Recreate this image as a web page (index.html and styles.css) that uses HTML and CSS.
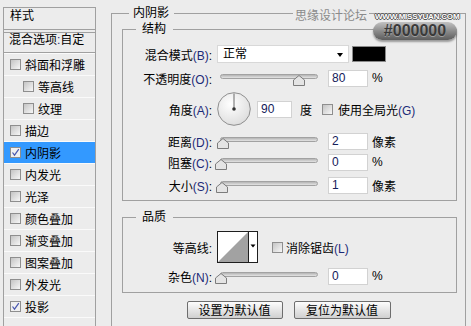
FILE: index.html
```html
<!DOCTYPE html>
<html lang="zh-CN">
<head>
    <meta charset="UTF-8">
    <title>图层样式 - 内阴影</title>
    <link rel="stylesheet" href="styles.css">
</head>
<body>
    <div class="dialog">
        <!-- 左侧样式列表 -->
        <div class="styles-list">
            <div class="list-title">样式</div>
            <div class="list-blend">混合选项<span class="key">:</span>自定</div>
            <div class="item"><span class="cb"></span>斜面和浮雕</div>
            <div class="item sub"><span class="cb"></span>等高线</div>
            <div class="item sub"><span class="cb"></span>纹理</div>
            <div class="item"><span class="cb"></span>描边</div>
            <div class="item active"><span class="cb"><svg width="9" height="9" viewBox="0 0 9 9"><path d="M1.5 4.5 L3.5 7.2 L7.8 1.2" fill="none" stroke="#4a58b0" stroke-width="1.2"/></svg></span>内阴影</div>
            <div class="item"><span class="cb"></span>内发光</div>
            <div class="item"><span class="cb"></span>光泽</div>
            <div class="item"><span class="cb"></span>颜色叠加</div>
            <div class="item"><span class="cb"></span>渐变叠加</div>
            <div class="item"><span class="cb"></span>图案叠加</div>
            <div class="item"><span class="cb"></span>外发光</div>
            <div class="item"><span class="cb"><svg width="9" height="9" viewBox="0 0 9 9"><path d="M1.5 4.5 L3.5 7.2 L7.8 1.2" fill="none" stroke="#4a58b0" stroke-width="1.2"/></svg></span>投影</div>
            <div class="item empty"></div>
        </div>

        <!-- 内阴影设置 -->
        <fieldset class="group">
            <legend>内阴影</legend>

            <fieldset class="box box-struct">
                <legend>结构</legend>
                <div class="row">
                    <span class="lbl">混合模式<span class="key">(B)</span>:</span>
                    <div class="select">正常<span class="arrow"></span></div>
                    <div class="swatch"></div>
                </div>
                <div class="row row-opacity">
                    <span class="lbl">不透明度<span class="key">(O)</span>:</span>
                    <div class="slider"><div class="track"></div><svg class="thumb" style="left: 73px" width="12" height="11" viewBox="0 0 12 11"><polygon points="6,0.5 11.5,5 11.5,10.5 0.5,10.5 0.5,5" fill="#e4e4e4" stroke="#7c7c7c"/></svg></div>
                    <input class="num" type="text" value="80">
                    <span class="unit">%</span>
                </div>
                <div class="row row-angle">
                    <span class="lbl">角度<span class="key">(A)</span>:</span>
                    <svg class="dial" width="34" height="34" viewBox="0 0 34 34">
                        <defs>
                            <radialGradient id="dialBg" cx="40%" cy="35%" r="70%">
                                <stop offset="0" stop-color="#ffffff"/>
                                <stop offset="1" stop-color="#dcdcdc"/>
                            </radialGradient>
                        </defs>
                        <circle cx="17" cy="17" r="16.3" fill="url(#dialBg)" stroke="#8e8e8e"/>
                        <line x1="17" y1="1.5" x2="17" y2="17" stroke="#6a6a6a"/>
                        <circle cx="17" cy="17" r="1.8" fill="#333"/>
                    </svg>
                    <input class="num num-angle" type="text" value="90">
                    <span class="unit-deg">度</span>
                    <span class="cb cb-global"></span>
                    <span class="cb-text">使用全局光<span class="key">(G)</span></span>
                </div>
                <div class="row">
                    <span class="lbl">距离<span class="key">(D)</span>:</span>
                    <div class="slider"><div class="track"></div><svg class="thumb" style="left: -3px" width="12" height="11" viewBox="0 0 12 11"><polygon points="6,0.5 11.5,5 11.5,10.5 0.5,10.5 0.5,5" fill="#e4e4e4" stroke="#7c7c7c"/></svg></div>
                    <input class="num" type="text" value="2">
                    <span class="unit">像素</span>
                </div>
                <div class="row row-tight">
                    <span class="lbl">阻塞<span class="key">(C)</span>:</span>
                    <div class="slider"><div class="track"></div><svg class="thumb" style="left: -5px" width="12" height="11" viewBox="0 0 12 11"><polygon points="6,0.5 11.5,5 11.5,10.5 0.5,10.5 0.5,5" fill="#e4e4e4" stroke="#7c7c7c"/></svg></div>
                    <input class="num" type="text" value="0">
                    <span class="unit">%</span>
                </div>
                <div class="row">
                    <span class="lbl">大小<span class="key">(S)</span>:</span>
                    <div class="slider"><div class="track"></div><svg class="thumb" style="left: -4px" width="12" height="11" viewBox="0 0 12 11"><polygon points="6,0.5 11.5,5 11.5,10.5 0.5,10.5 0.5,5" fill="#e4e4e4" stroke="#7c7c7c"/></svg></div>
                    <input class="num" type="text" value="1">
                    <span class="unit">像素</span>
                </div>
            </fieldset>

            <fieldset class="box box-quality">
                <legend>品质</legend>
                <div class="row row-contour">
                    <span class="lbl">等高线:</span>
                    <svg class="contour" width="41" height="32" viewBox="0 0 41 32">
                        <rect x="0.5" y="0.5" width="40" height="31" fill="#fff" stroke="#1e1e1e"/>
                        <polygon points="1,31 31,1 31,31" fill="#a2a2a2"/>
                        <line x1="31.5" y1="1" x2="31.5" y2="31" stroke="#1e1e1e"/>
                        <polygon points="33.5,13.5 38.5,13.5 36,16.5" fill="#000"/>
                    </svg>
                    <span class="cb cb-anti"></span>
                    <span class="cb-text">消除锯齿<span class="key">(L)</span></span>
                </div>
                <div class="row">
                    <span class="lbl">杂色<span class="key">(N)</span>:</span>
                    <div class="slider"><div class="track"></div><svg class="thumb" style="left: -5px" width="12" height="11" viewBox="0 0 12 11"><polygon points="6,0.5 11.5,5 11.5,10.5 0.5,10.5 0.5,5" fill="#e4e4e4" stroke="#7c7c7c"/></svg></div>
                    <input class="num" type="text" value="0">
                    <span class="unit">%</span>
                </div>
            </fieldset>

            <div class="buttons">
                <button class="btn">设置为默认值</button>
                <button class="btn btn-reset">复位为默认值</button>
            </div>
        </fieldset>
    </div>

    <!-- 水印 -->
    <div class="wm-name">思缘设计论坛</div>
    <div class="wm-url">WWW.MISSYUAN.COM</div>
    <div class="wm-badge">#000000</div>
</body>
</html>
```

FILE: styles.css
```css
* {
    box-sizing: border-box;
}

body {
    margin: 0;
    width: 471px;
    height: 326px;
    overflow: hidden;
    position: relative;
    background: #ececec;
    font-family: "Liberation Sans", "Noto Sans CJK SC", sans-serif;
    font-size: 12px;
    color: #000;
}

.dialog {
    display: flex;
    align-items: flex-start;
    padding-left: 3px;
}

/* 左侧列表 (底边被窗口截断) */
.styles-list {
    width: 93px;
    height: 319px;
    margin-top: 7px;
    border: 1px solid #a0a0a0;
    border-bottom: none;
    overflow: hidden;
}

.list-title {
    height: 22px;
    padding-left: 6px;
    line-height: 17px;
    border-bottom: 1px solid #a0a0a0;
}

.list-blend {
    height: 21px;
    margin-top: 2px;
    padding-left: 5px;
    line-height: 15px;
    border-top: 1px solid #a0a0a0;
    border-bottom: 1px solid #a0a0a0;
}

.item {
    display: flex;
    align-items: center;
    height: 22px;
    padding-left: 6px;
    border-top: 1px solid #fafafa;
}

.item.sub {
    padding-left: 19px;
}

.item.active {
    background: #3399ff;
}

.item.empty {
    height: 9px;
}

/* 复选框 */
.cb {
    display: flex;
    align-items: center;
    justify-content: center;
    width: 11px;
    height: 11px;
    margin-right: 4px;
    border: 1px solid #8e8e8e;
    background: linear-gradient(135deg, #c4c4c4, #f7f7f7);
    flex-shrink: 0;
}

.item.active .cb,
.item .cb svg {
    background: #f0f0f0;
}

.key {
    color: #1c2a78;
}

/* 右侧分组 (底边被窗口截断) */
.group {
    width: 355px;
    height: 321px;
    min-width: 0;
    margin: 5px 0 0 15px;
    padding: 0 8px 0 10px;
    border: 1px solid #a0a0a0;
    border-bottom: none;
}

.group > legend {
    margin-left: 7px;
    padding: 0 5px 0 4px;
    line-height: 16px;
}

.box {
    min-width: 0;
    margin: 0;
    border: 1px solid #a0a0a0;
}

.box > legend {
    margin-left: 13px;
    padding: 0 7px 0 6px;
    line-height: 16px;
}

.box-struct {
    padding: 8px 0 6px 0;
}

.box-quality {
    margin-top: 8px;
    padding: 6px 0 7px 0;
}

.row {
    display: flex;
    align-items: center;
    height: 18px;
}

.row + .row {
    margin-top: 5px;
}

.row-opacity {
    margin-top: 6px !important;
}

.row-angle {
    height: 36px;
    margin-top: 4px !important;
}

.row-tight {
    margin-top: 3px !important;
}

.row-contour {
    height: 32px;
}

.row-contour + .row {
    margin-top: 4px;
}

.lbl {
    width: 89px;
    margin-right: 5px;
    text-align: right;
    white-space: nowrap;
}

/* 下拉框与色块 */
.select {
    position: relative;
    width: 132px;
    height: 18px;
    padding-left: 5px;
    line-height: 16px;
    background: #fff;
    border: 1px solid #d8d8d8;
}

.arrow {
    position: absolute;
    right: 5px;
    top: 7px;
    border-left: 3.5px solid transparent;
    border-right: 3.5px solid transparent;
    border-top: 4px solid #000;
}

.swatch {
    width: 34px;
    height: 16px;
    margin-left: 3px;
    background: #000;
    border: 1px solid #8a8a8a;
}

/* 滑块 */
.slider {
    position: relative;
    width: 98px;
    height: 18px;
    margin-left: 3px;
}

.track {
    position: absolute;
    left: 0;
    right: 0;
    top: 5px;
    height: 5px;
    border: 1px solid #a2a2a2;
    border-radius: 3px;
    background: linear-gradient(#b4b4b4, #e4e4e4);
}

.thumb {
    position: absolute;
    top: 6px;
}

.num {
    width: 40px;
    height: 17px;
    margin: 0 0 0 10px;
    padding: 0 0 0 3px;
    border: 1px solid #d2d2d2;
    background: #fff;
    font-family: "Liberation Sans", sans-serif;
    font-size: 12px;
    color: #14205a;
    outline: none;
}

.unit {
    margin-left: 4px;
}

.num-angle {
    width: 35px;
    margin-left: 6px;
}

.unit-deg {
    margin-left: 8px;
}

.cb-global {
    margin: 0 5px 0 10px;
}

.contour {
    flex-shrink: 0;
}

.cb-anti {
    margin: 0 3px 0 14px;
}

/* 按钮 */
.buttons {
    display: flex;
    justify-content: center;
    gap: 11px;
    margin-top: 8px;
    padding-right: 2px;
}

.btn {
    width: 96px;
    height: 18px;
    padding: 0;
    border: 1px solid #6e6e6e;
    border-radius: 2px;
    background: linear-gradient(#fdfdfd, #e6e6e6 50%, #d0d0d0);
    font-family: "Noto Sans CJK SC", sans-serif;
    font-size: 12px;
    line-height: 16px;
    color: #000;
}

.btn-reset {
    width: 97px;
}

/* 水印 */
.wm-name {
    position: absolute;
    left: 293px;
    top: 6px;
    padding: 0 2px;
    background: #ececec;
    color: #8a8a8a;
    font-family: "Noto Sans CJK SC", sans-serif;
    font-size: 12px;
    line-height: 17px;
}

.wm-url {
    position: absolute;
    left: 375px;
    top: 12px;
    color: #fff;
    font-size: 8px;
    font-weight: bold;
    letter-spacing: -0.2px;
    text-shadow: 1px 0 0 #555, -1px 0 0 #555, 0 1px 0 #555, 0 -1px 0 #555;
}

.wm-badge {
    position: absolute;
    left: 373px;
    top: 22px;
    width: 84px;
    height: 18px;
    border-radius: 9px;
    background: linear-gradient(#c2c2c2, #8c8c8c 50%, #5c5c5c);
    box-shadow: 0 2px 2px rgba(0, 0, 0, 0.35);
    color: #3a3a3a;
    font-size: 16px;
    font-weight: bold;
    line-height: 18px;
    text-align: center;
    text-shadow: 0 1px 0 rgba(255, 255, 255, 0.35);
}
```
